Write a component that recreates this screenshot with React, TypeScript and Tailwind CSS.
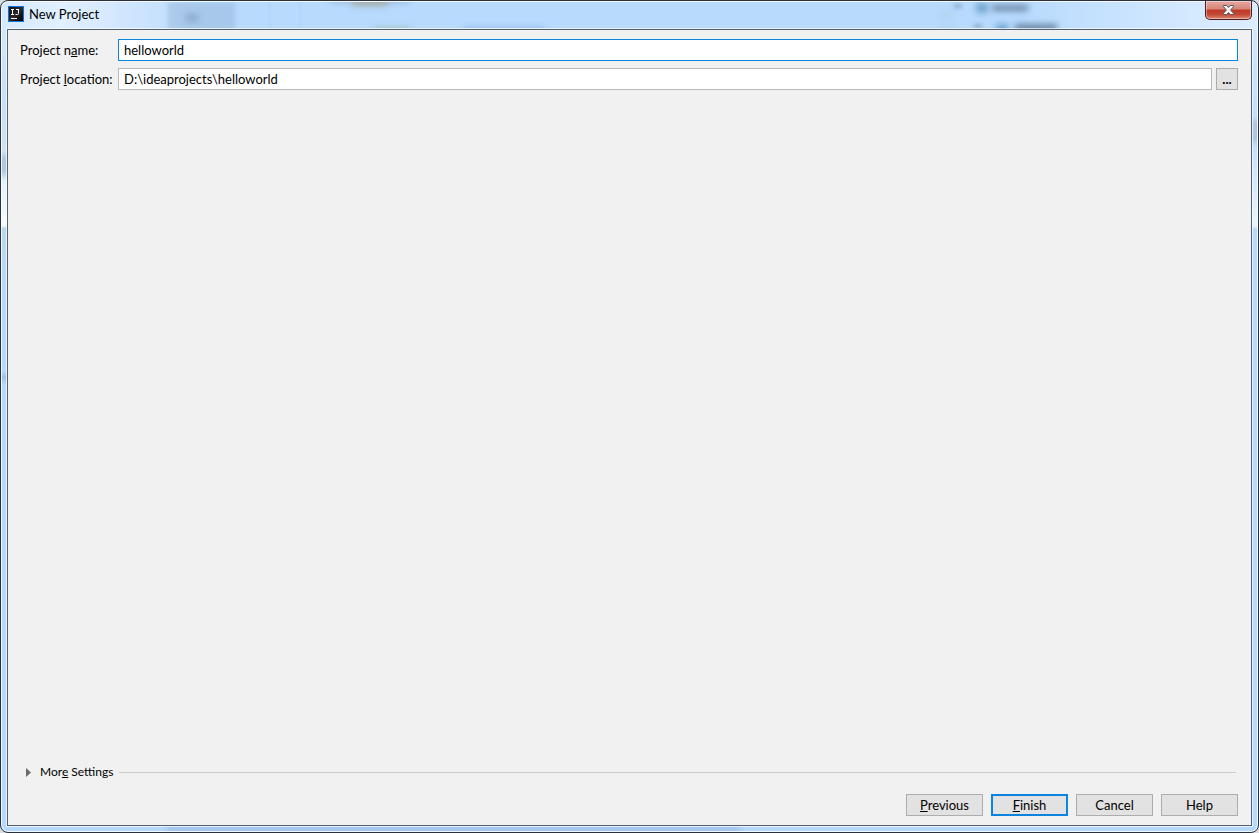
import { useState } from 'react';
import type { ReactNode } from 'react';

function AppIcon() {
    return (
        <svg width="16" height="16" viewBox="0 0 16 16" aria-hidden="true">
            <defs>
                <linearGradient id="app-icon" x1="0" y1="0" x2="1" y2="1">
                    <stop offset="0" stopColor="#111111" />
                    <stop offset="0.5" stopColor="#2a2a2a" />
                    <stop offset="1" stopColor="#000000" />
                </linearGradient>
            </defs>
            <rect width="16" height="16" fill="#0b74de" />
            <rect x="1" y="1" width="14" height="14" fill="url(#app-icon)" />
            <path
                d="M3 3.5h3M4.5 3.5v5M3 8.5h3M8 3.5h3M10.5 3.5v4q0 1-1 1H7.5M3 12.5h6"
                fill="none"
                stroke="#ffffff"
            />
        </svg>
    );
}

function CloseIcon() {
    return (
        <svg width="13" height="12" viewBox="0 0 13 12" aria-hidden="true">
            <path
                d="M1.5 1.5h3.2l1.8 2 1.8-2h3.2v1.2L8.6 6l2.9 3.3v1.2H8.3l-1.8-2-1.8 2H1.5V9.3L4.4 6 1.5 2.7z"
                fill="#f4f4f5"
                stroke="#535666"
            />
        </svg>
    );
}

// Shapes from the window behind, seen through the glass title bar
function GlassReflections() {
    return (
        <div
            className="pointer-events-none absolute inset-0 overflow-hidden"
            aria-hidden="true"
        >
            <div className="absolute top-0 left-[166px] h-7 w-[67px] bg-[#9dbde0]/60 blur-[2px]" />
            <div className="absolute top-3 left-[184px] h-2 w-3 bg-[#7894b4]/60 blur-[3px]" />
            <div className="absolute top-0 left-[267px] h-7 w-8 border-x border-[#9fc2e8]/40 blur-[1px]" />
            <div className="absolute -top-1 left-[328px] h-1 w-20 bg-[#7892b6]/60 blur-[3px]" />
            <div className="absolute -top-1 left-[350px] h-2 w-9 bg-[#a39c7d]/60 blur-[3px]" />
            <div className="absolute top-[25px] left-[372px] h-3 w-9 bg-[#a2bda5]/70 blur-[3px]" />
            <div className="absolute top-[25px] left-[462px] h-3 w-20 bg-[#87acda]/60 blur-[3px]" />
            <div className="absolute top-3 right-[304px] h-4 w-3 border-y-2 border-[#9cbcb0]/60 blur-[3px]" />
            <div className="absolute top-[2px] right-[295px] h-1 w-2 bg-[#829fbe]/80 blur-[2px]" />
            <div className="absolute top-[22px] right-[275px] h-1 w-2 bg-[#829fbe]/80 blur-[2px]" />
            <div className="absolute top-px right-[269px] h-2.5 w-3 bg-[#4383b0]/60 blur-[3px]" />
            <div className="absolute top-[22px] right-[249px] h-3 w-3 bg-[#4383b0]/60 blur-[3px]" />
            <div className="absolute top-[3px] right-[229px] h-1.5 w-9 bg-[#4c6580]/70 blur-[3px]" />
            <div className="absolute top-[22px] right-[200px] h-2 w-[42px] bg-[#4c6580]/70 blur-[3px]" />
        </div>
    );
}

interface DialogButtonProps {
    children: ReactNode;
    primary?: boolean;
}

function DialogButton({ children, primary }: DialogButtonProps) {
    return (
        <button
            type="button"
            className={
                primary
                    ? 'h-[22px] w-[77px] border-2 border-[#0a84df] bg-[#e2e2e2] leading-4'
                    : 'h-[22px] w-[77px] border border-[#adadad] bg-[#e2e2e2] leading-4'
            }
        >
            {children}
        </button>
    );
}

export default function App() {
    const [name, setName] = useState('helloworld');
    const [location, setLocation] = useState('D:\\ideaprojects\\helloworld');

    return (
        <div className="min-h-screen bg-[#d9dde3] font-[Lato,'Noto_Sans',sans-serif] text-[13px] text-black">
            <div className="relative flex min-h-screen flex-col rounded-lg border border-[#2a303c] bg-[linear-gradient(90deg,#b6dafd_160px,#a6c8ec_170px,#a6c8ec_735px,#b6dafd_745px),linear-gradient(180deg,#d3e8ff_0,#c5e0fc_100px,#cfe2f2_150px,#b0c8e1_157px,#b0c8e1_170px,#e4f2ff_180px,#f6fbff_225px,#b9d9ef_227px,#b6dafd_300px,#b6dafd_370px,#9fc1e6_376px,#b6dafd_384px),linear-gradient(180deg,#d3e8ff_0,#c3e0ff_116px,#b0c8e3_122px,#b0c8e3_138px,#c3e0ff_146px,#e9f4ff_225px,#b6dafd_228px)] bg-[size:100%_6px,50%_100%,50%_100%] bg-[position:bottom,left,right] bg-no-repeat px-[6px] pb-[6px] inset-ring inset-ring-white/80">
                <header className="absolute inset-x-px top-px h-7 rounded-t-lg bg-[linear-gradient(90deg,#d5e9ff_0,#e2f0ff_60px,#cfe5fe_130px,#b7dafd_200px,#b7dafd_calc(100%-240px),#d5e9ff_calc(100%-60px),#dcecff_100%)]">
                    <GlassReflections />
                </header>
                <div className="relative flex h-7 items-start justify-between">
                    <div className="flex items-center gap-[5px] pt-[5px] pl-px">
                        <AppIcon />
                        <h1 className="leading-4">New Project</h1>
                    </div>
                    <button
                        type="button"
                        aria-label="Close"
                        className="flex h-[19px] w-[47px] items-center justify-center rounded-b-[5px] border border-t-0 border-[#4b1c24] bg-[linear-gradient(180deg,#e8aaa2_0%,#d78378_45%,#bd3826_50%,#c34935_75%,#dc8871_100%)] inset-ring inset-ring-white/40"
                    >
                        <CloseIcon />
                    </button>
                </div>

                <form
                    className="relative flex flex-1 flex-col border border-[#53616f] bg-[#f1f1f1] pt-[9px] pr-[13px] pb-[9px] pl-3 outline outline-white/70"
                    onSubmit={(e) => e.preventDefault()}
                >
                    <div className="grid grid-cols-[98px_1fr] items-center gap-y-[7px]">
                        <label
                            htmlFor="project-name"
                            className="leading-4 whitespace-nowrap"
                        >
                            Project n<u>a</u>me:
                        </label>
                        <input
                            id="project-name"
                            type="text"
                            value={name}
                            onChange={(e) => setName(e.target.value)}
                            className="h-[22px] w-full border border-[#0a84df] bg-white px-[5px] leading-4 outline-none"
                        />
                        <label
                            htmlFor="project-location"
                            className="leading-4 whitespace-nowrap"
                        >
                            Project <u>l</u>ocation:
                        </label>
                        <div className="flex gap-1">
                            <input
                                id="project-location"
                                type="text"
                                value={location}
                                onChange={(e) => setLocation(e.target.value)}
                                className="h-[22px] min-w-0 flex-1 border border-[#b9b9b9] bg-white px-[5px] leading-4 outline-none"
                            />
                            <button
                                type="button"
                                aria-label="Browse"
                                className="h-[22px] w-[22px] border border-[#adadad] bg-[#e2e2e2] leading-4 font-bold"
                            >
                                ...
                            </button>
                        </div>
                    </div>

                    <div className="mt-auto flex items-center gap-[6px] pr-[2px] pl-[6px] text-[12px]">
                        <button
                            type="button"
                            aria-expanded="false"
                            className="flex items-center gap-[9px] leading-4"
                        >
                            <svg width="5" height="9" viewBox="0 0 5 9" aria-hidden="true">
                                <path d="M0 0l5 4.5L0 9z" fill="#6b6b6b" />
                            </svg>
                            <span>
                                Mor<u>e</u> Settings
                            </span>
                        </button>
                        <div className="h-px flex-1 bg-[#cccccc]" />
                    </div>

                    <div className="mt-[14px] flex justify-end gap-2">
                        <DialogButton>
                            <u>P</u>revious
                        </DialogButton>
                        <DialogButton primary>
                            <u>F</u>inish
                        </DialogButton>
                        <DialogButton>Cancel</DialogButton>
                        <DialogButton>Help</DialogButton>
                    </div>
                </form>
            </div>
        </div>
    );
}
